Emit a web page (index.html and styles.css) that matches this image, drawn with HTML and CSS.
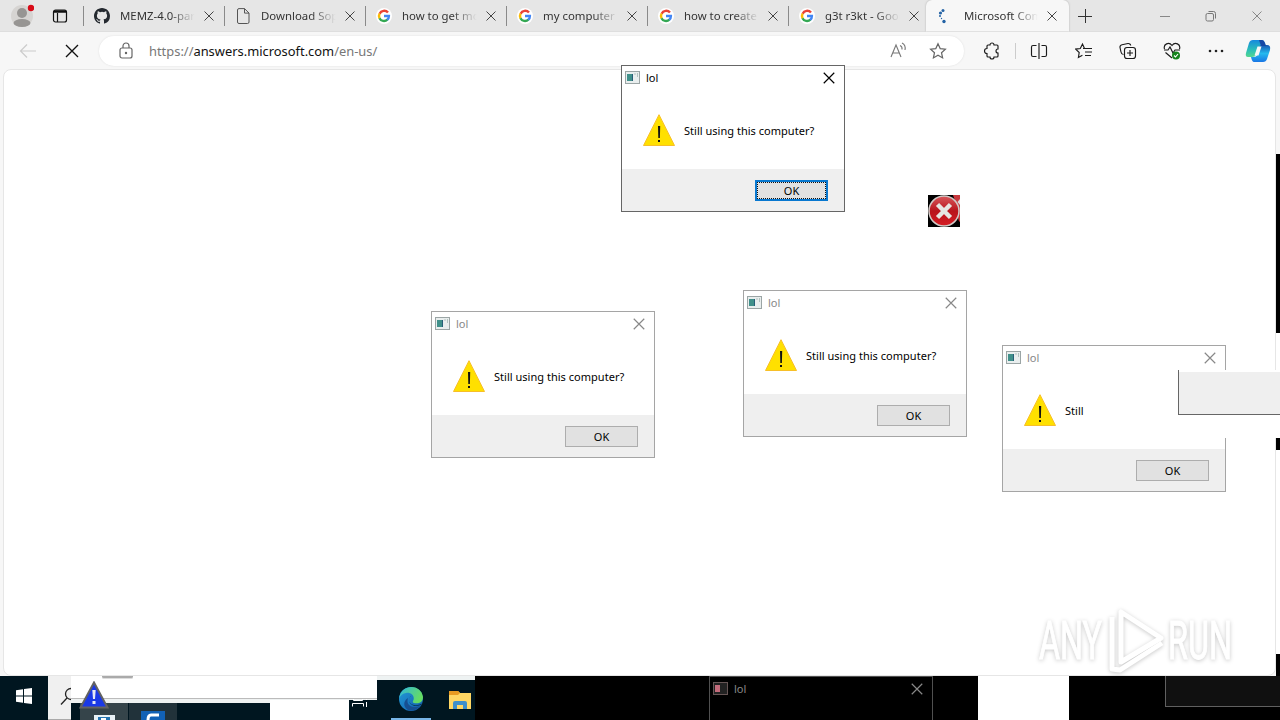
FILE: index.html
```html
<!DOCTYPE html>
<html lang="en">
<head>
<meta charset="utf-8">
<title>Microsoft Community</title>
<link rel="stylesheet" href="styles.css">
</head>
<body>
<svg class="defs" aria-hidden="true">
  <symbol id="close" viewBox="0 0 12 12"><path d="M1.5 1.5l9 9M10.5 1.5l-9 9" fill="none" stroke="currentColor" stroke-width="1"/></symbol>
  <symbol id="google" viewBox="0 0 16 16">
    <circle cx="8" cy="8" r="8" fill="#fff"/>
    <g fill="none" stroke-width="2.4"><path d="M12 4.6A5 5 0 0 0 3.6 5.7" stroke="#ea4335"/><path d="M3.6 5.6a5 5 0 0 0 0 4.8" stroke="#fbbc05"/><path d="M3.5 10.2a5 5 0 0 0 7.9 1.5" stroke="#34a853"/><path d="M11.2 11.9A5 5 0 0 0 12.9 8H8" stroke="#4285f4"/></g>
  </symbol>
  <symbol id="app" viewBox="0 0 15 13"><rect x=".5" y=".5" width="14" height="12" fill="#e9eeee" stroke="#9ba5a5"/><rect x="2" y="3" width="5" height="7" fill="#40908a"/><path d="M7.500 3v7" stroke="#285e78"/><path d="M9.500 3h1M12 3h1M12 5h1" stroke="#7d9993"/></symbol>
  <symbol id="warn" viewBox="0 0 32 32"><path d="M16 .7L31.500 31.500H.5z" fill="#ffe000" stroke="#f7bf28"/><path d="M15 12h2.200l-.3 12h-1.600zM15 26h2v2h-2z" fill="#111"/></symbol>
</svg>
<div class="desktop">
  <div class="browser">
    <div class="tabstrip">
      <div class="controls">
        <svg class="avatar" width="24" height="24" viewBox="0 0 24 24"><circle cx="12" cy="12" r="11" fill="#d6d4d2"/><circle cx="12" cy="9" r="5" fill="#979593"/><ellipse cx="12" cy="19" rx="8.500" ry="4" fill="#979593"/><circle cx="21" cy="4" r="3.200" fill="#d80b18"/></svg>
        <svg width="16" height="16" viewBox="0 0 16 16" fill="none" stroke="#111" stroke-width="1.200"><rect x="1.500" y="2" width="13" height="12" rx="2"/><path d="M2 3.500h12" stroke-width="2.500"/><path d="M5.500 5v9"/></svg>
      </div>
      <div class="tab"><svg class="fav" viewBox="0 0 16 16"><path fill="#24292f" d="M8 0C3.580 0 0 3.580 0 8c0 3.540 2.290 6.530 5.470 7.590.4.070.55-.17.55-.38v-1.490c-2.230.48-2.700-.95-2.700-.95-.36-.92-.89-1.170-.89-1.170-.73-.5.05-.49.05-.49.810.06 1.230.83 1.230.83.720 1.230 1.880.87 2.340.67.070-.52.28-.87.510-1.070-1.780-.2-3.650-.89-3.650-3.950 0-.87.310-1.590.82-2.150-.08-.2-.36-1.020.08-2.120 0 0 .67-.21 2.200.82a7.600 7.600 0 0 1 4 0c1.530-1.040 2.200-.82 2.200-.82.44 1.100.16 1.920.08 2.120.51.56.82 1.270.82 2.150 0 3.070-1.870 3.750-3.650 3.950.29.25.54.73.54 1.480v2.190c0 .21.15.46.55.38A8 8 0 0 0 16 8c0-4.420-3.580-8-8-8z"/></svg><span class="label">MEMZ-4.0-par</span><svg class="x"><use href="#close"/></svg></div>
      <div class="tab"><svg class="fav" viewBox="0 0 16 16" fill="none" stroke="#555"><path d="M9.500.6H4A1.500 1.500 0 0 0 2.500 2v12A1.500 1.500 0 0 0 4 15.500h8.500a1.500 1.500 0 0 0 1.500-1.500V5zv4.500H14"/></svg><span class="label">Download Sop</span><svg class="x"><use href="#close"/></svg></div>
      <div class="tab"><svg class="fav"><use href="#google"/></svg><span class="label">how to get mo</span><svg class="x"><use href="#close"/></svg></div>
      <div class="tab"><svg class="fav"><use href="#google"/></svg><span class="label">my computer</span><svg class="x"><use href="#close"/></svg></div>
      <div class="tab"><svg class="fav"><use href="#google"/></svg><span class="label">how to create</span><svg class="x"><use href="#close"/></svg></div>
      <div class="tab last"><svg class="fav"><use href="#google"/></svg><span class="label">g3t r3kt - Goog</span><svg class="x"><use href="#close"/></svg></div>
      <div class="tab active"><svg class="fav" viewBox="0 0 16 16" fill="#2463a5"><circle cx="6" cy="2.500" r="1.500"/><circle cx="3.500" cy="5" r="1.600"/><circle cx="3" cy="8" r="1"/><circle cx="4.500" cy="10.500" r=".7"/><circle cx="7" cy="13.500" r="1.700"/></svg><span class="label">Microsoft Com</span><svg class="x"><use href="#close"/></svg></div>
      <svg class="plus" width="16" height="16" viewBox="0 0 16 16" stroke="#333"><path d="M1 8.500h14M8.500 1v14"/></svg>
      <div class="window-buttons">
        <svg width="12" height="12" viewBox="0 0 12 12"><path d="M1 6.500h10" stroke="#888"/></svg>
        <svg width="12" height="12" viewBox="0 0 12 12" fill="none" stroke="#777"><rect x="1" y="3.500" width="7.500" height="7.500" rx="1.500"/><path d="M3.500 1.500h5a2 2 0 0 1 2 2v5"/></svg>
        <svg width="12" height="12" class="dim"><use href="#close"/></svg>
      </div>
    </div>
    <div class="toolbar">
      <svg class="back" width="18" height="16" viewBox="0 0 18 16" fill="none" stroke="#ccc" stroke-width="1.200"><path d="M17 8H2M8 1.500L1.500 8 8 14.500"/></svg>
      <svg class="stop" width="16" height="16"><use href="#close"/></svg>
      <div class="address">
        <svg width="16" height="18" viewBox="0 0 16 18" fill="none" stroke="#666" stroke-width="1.200"><rect x="2" y="6" width="12" height="10" rx="2"/><path d="M5 6V4a3 3 0 0 1 6 0v2"/><circle cx="8" cy="11" r=".6" fill="#666"/></svg>
        <div class="url">https://<b>answers.microsoft.com</b>/en-us/</div>
        <svg class="read" width="18" height="18" viewBox="0 0 18 18" fill="none" stroke="#777" stroke-width="1.100"><path d="M2 15L7 3l5 12M3.700 11h6.600M11 3.500q2.500 1 2 4M13 1q4 2 3 7"/></svg>
        <svg class="star" width="18" height="18" viewBox="0 0 18 18" fill="none" stroke="#666" stroke-width="1.200"><path d="M9 1.800l2.200 4.800 5.200.6-3.900 3.500 1.100 5.200L9 13.300l-4.600 2.600 1.100-5.200-3.900-3.500 5.200-.6z"/></svg>
      </div>
      <div class="tools">
        <svg viewBox="0 0 18 18"><path d="M5 3H7a2 2 0 0 1 4 0h3q1 0 1 1v3a2 2 0 1 0 0 4v3q0 1-1 1h-3a2 2 0 0 1-4 0H5q-1 0-1-1v-2.500a2.500 2.500 0 0 1 0-5V4q0-1 1-1z"/></svg>
        <i></i>
        <svg viewBox="0 0 18 18"><path d="M6.500 3.500H3a1.500 1.500 0 0 0-1.500 1.500v8A1.500 1.500 0 0 0 3 14.500h3.500M11.500 3.500H15A1.500 1.500 0 0 1 16.500 5v8a1.500 1.500 0 0 1-1.500 1.500h-3.500M9 1v16"/></svg>
        <svg viewBox="0 0 18 18"><path d="M9.500 6.500L7.500 2 5.300 6.500l-4.600.6 3.500 3.400-.8 5 4-2.200M8 6.500h9M10 10h7M10 13.500h6"/></svg>
        <svg viewBox="0 0 18 18"><path d="M4.500 12.500A3 3 0 0 1 2 10L1 5.500A2.500 2.500 0 0 1 3 2.700l6-1.200a2.300 2.300 0 0 1 2.700 2"/><rect x="5.500" y="5.500" width="11" height="11" rx="2.500"/><path d="M11 8v6M8 11h6"/></svg>
        <svg viewBox="0 0 18 18"><path d="M1.500 7C0 2 6-.5 9 3.500 12-.5 18 2 16.500 7M1 8h4l2-3 3 6 2-3h5M2.500 10.500L9 16"/><circle cx="13" cy="13.500" r="4" fill="#15831c" stroke="none"/><path d="M11 13.500l1.500 1.500 2.500-3" stroke="#fff"/></svg>
        <svg viewBox="0 0 18 18" class="dots"><circle cx="3" cy="9" r="1.300"/><circle cx="9" cy="9" r="1.300"/><circle cx="15" cy="9" r="1.300"/></svg>
      </div>
      <svg class="copilot" width="26" height="24" viewBox="0 0 26 24">
        <defs>
          <linearGradient id="cpa" x1="0" y1="0" x2="0" y2="1"><stop stop-color="#1689de"/><stop offset=".6" stop-color="#2cc0b7"/><stop offset="1" stop-color="#55d790"/></linearGradient>
          <linearGradient id="cpb" x1="0" y1="0" x2="0" y2="1"><stop stop-color="#1755b0"/><stop offset=".5" stop-color="#25b9ee"/><stop offset="1" stop-color="#1976e5"/></linearGradient>
        </defs>
        <path d="M8 1h9q2 0 3 3l1 4h-5q-3 0-4 4l-1 4q-1 2-4 2H3Q0 18 1 14L4 4q1-3 4-3z" fill="url(#cpa)"/>
        <path d="M16 6h6q4 0 3 5l-3 9q-1 3-4 3H9q-2 0-3-5h3q3 0 4-4l1-5q1-3 2-3z" fill="url(#cpb)"/>
        <path d="M14 1h3q2 0 3 3l1 3h-5z" fill="#1746a5"/><path d="M12.500 7.500h4l-3 9h-4z" fill="#f7f7f7"/>
      </svg>
    </div>
    <div class="page"></div>
  </div>

  <div class="taskbar">
    <div class="start"><svg width="16" height="16" viewBox="0 0 16 16" fill="#fff"><path d="M0 2.200l7-1v6.300H0zM8 1l8-1v7.500H8zM0 8.500h7v6.300l-7-1zM8 8.500h8V16l-8-1z"/></svg></div>
    <div class="search"><svg width="20" height="20" viewBox="0 0 20 20" fill="none" stroke="#222" stroke-width="1.300"><circle cx="12" cy="7" r="5.500"/><path d="M8 11l-6 6.500"/></svg></div>
    <div class="items">
      <div class="item first"><svg width="21" height="5" viewBox="0 0 21 5"><path fill="#e8f1f5" d="M0 0h21v5H0z"/><path fill="#2474b2" d="M4 2h12v3H4z"/><path fill="#fff" d="M7 3h5v2H7z"/></svg></div>
      <div class="item second"><svg width="24" height="9" viewBox="0 0 24 9"><path fill="#1261b5" d="M0 0h24v9H0z"/><path d="M18 4H10Q7 4 7 9" fill="none" stroke="#fff" stroke-width="3"/></svg></div>
    </div>
    <div class="pinned">
      <div class="pin running"><svg width="26" height="26" viewBox="0 0 26 26">
        <defs><linearGradient id="edge" x1="0" y1="0" x2="1" y2=".4"><stop stop-color="#2fb7df"/><stop offset="1" stop-color="#65dc62"/></linearGradient><linearGradient id="edgeb" x1="0" y1="0" x2="1" y2="1"><stop stop-color="#239ed9"/><stop offset="1" stop-color="#125aab"/></linearGradient></defs>
        <circle cx="13" cy="13" r="12" fill="url(#edgeb)"/><path d="M1.200 12C3-2 23-3 25 11c0 6-5 7-9 6-2-.7-1-2-.5-3C17 9 12 6 8 7c-3 .6-5 2-6.800 5z" fill="url(#edge)"/><path d="M10 12c-2 6 2 11 12 8-3 4-8 5.500-12 4-5-3-5-9 0-12z" fill="#174f91"/><path d="M13 10c-3 2-3 8 3 9 3 .5 6-.3 8-1.500l-1 1.500c-6 2-12 0-12-5 0-2 1-3.500 2-4z" fill="#062433"/>
      </svg></div>
      <div class="pin"><svg width="22" height="20" viewBox="0 0 22 20"><path d="M0 1h9l2 2h11v16H0z" fill="#ffd764"/><path d="M0 1h9l2 2-2 2H0z" fill="#e89b22"/><path d="M4 19v-6q0-2 2-2h10q2 0 2 2v6h-4v-4H8v4z" fill="#3e8fcb"/></svg></div>
    </div>
    <div class="void"></div>
    <div class="blank"></div>
    <div class="void rest"></div>
  </div>

  <div class="smear white-a"></div>
  <div class="smear white-b"></div>
  <div class="smear nub"></div>
  <svg class="smear taskview" width="18" height="8" viewBox="0 0 18 8" fill="none" stroke="#fff"><path d="M2.500 0v1.500h9V0M1.500 7.500v-3h11v3M15.500 0v1M15.500 3v5"/></svg>
  <svg class="smear bluewarn" width="30" height="28" viewBox="0 0 30 28"><path d="M15 1.500L28.500 26.500H1.500z" fill="#1a39e6" stroke="#626262" stroke-width="2"/><path d="M13.300 9h3.400l-.7 9h-2zM13.500 20h3v3h-3z" fill="#e5e9f5"/></svg>
  <div class="smear edge-a"></div><div class="smear edge-b"></div><div class="smear edge-c"></div><div class="smear edge-d"></div><div class="smear edge-e"></div>

  <div class="dialog front d1"><div class="title"><svg class="app"><use href="#app"/></svg><span>lol</span><svg class="x"><use href="#close"/></svg></div><div class="body"><svg class="warn"><use href="#warn"/></svg><span>Still using this computer?</span></div><div class="foot"><div class="ok">OK</div></div></div>
  <div class="dialog d2"><div class="title"><svg class="app"><use href="#app"/></svg><span>lol</span><svg class="x"><use href="#close"/></svg></div><div class="body"><svg class="warn"><use href="#warn"/></svg><span>Still using this computer?</span></div><div class="foot"><div class="ok">OK</div></div></div>
  <div class="dialog d3"><div class="title"><svg class="app"><use href="#app"/></svg><span>lol</span><svg class="x"><use href="#close"/></svg></div><div class="body"><svg class="warn"><use href="#warn"/></svg><span>Still using this computer?</span></div><div class="foot"><div class="ok">OK</div></div></div>
  <div class="dialog d4"><div class="title"><svg class="app"><use href="#app"/></svg><span>lol</span><svg class="x"><use href="#close"/></svg></div><div class="body"><svg class="warn"><use href="#warn"/></svg><span>Still</span></div><div class="foot"><div class="ok">OK</div></div></div>
  <div class="smear patch"></div>
  <div class="smear fragment"></div>
  <div class="dialog inverted d5"><div class="title"><svg class="app" viewBox="0 0 15 13"><rect x=".5" y=".5" width="14" height="12" fill="#222" stroke="#655"/><rect x="2" y="3" width="5" height="7" fill="#c36b7b"/></svg><span>lol</span><svg class="x"><use href="#close"/></svg></div></div>
  <div class="smear dark-fragment"></div>

  <svg class="error" width="32" height="32" viewBox="0 0 32 32">
    <defs><linearGradient id="red" x1="0" y1="0" x2="0" y2="1"><stop stop-color="#d8595c"/><stop offset=".5" stop-color="#b8141c"/><stop offset="1" stop-color="#d51d25"/></linearGradient></defs>
    <path fill="#000" d="M0 0h32v32H0z"/><path d="M25 0h7v27q-3-2-2-12z" fill="#c8383d"/><path d="M29.500 7l2.500-3v6z" fill="#ddd"/>
    <circle cx="16" cy="16" r="15" fill="url(#red)" stroke="#d1cbc8" stroke-width="1.500"/><path d="M9.500 9.500l13 13M22.500 9.500l-13 13" stroke="#e6e6e2" stroke-width="4.500"/>
  </svg>

  <svg class="watermark" width="210" height="76" viewBox="0 0 210 76">
    <g fill="#fff" stroke="#fff" stroke-width="1">
      <text x="9" y="55" textLength="63" lengthAdjust="spacingAndGlyphs">ANY</text>
      <text x="138" y="55" textLength="64" lengthAdjust="spacingAndGlyphs">RUN</text>
    </g>
    <g fill="none" stroke="#fff" stroke-width="5" stroke-linejoin="round"><path d="M91 8v50l40-24z"/><path d="M82 13v52l8 1 42-27"/></g>
  </svg>
</div>
</body>
</html>
```
FILE: styles.css
```css
* { box-sizing: border-box; }
body { margin: 0; overflow: hidden; font-family: "Noto Sans", "Open Sans", sans-serif; }
svg { display: block; flex: none; }
.defs { position: absolute; width: 0; height: 0; }
.desktop { position: relative; width: 1280px; height: 720px; overflow: hidden; background: #fff; display: flex; flex-direction: column; }
.browser { height: 676px; background: #f7f7f7; display: flex; flex-direction: column; }

.tabstrip { height: 32px; display: flex; align-items: center; background: #e6e6e6; border-bottom: 1px solid #dedede; }
.controls { width: 83px; display: flex; align-items: center; gap: 16px; padding-left: 10px; }
.controls .avatar { margin-right: 2px; }
.tab { position: relative; width: 141px; height: 32px; padding-left: 11px; display: flex; align-items: center; color: #333; flex: none; }
.tab::before { content: ""; position: absolute; left: 0; top: 6px; width: 1px; height: 20px; background: #8a8a8a; }
.tab .fav { width: 16px; height: 16px; }
.tab .label { width: 83px; margin-left: 10px; white-space: nowrap; font-size: 11.4px; line-height: 18px; -webkit-mask-image: linear-gradient(90deg, #000 60%, transparent 90%); mask-image: linear-gradient(90deg, #000 60%, transparent 90%); }
.tab .x { width: 12px; height: 12px; color: #444; }
.tab.last { width: 138px; }
.tab.active { width: 143px; background: #f7f7f7; border-radius: 6px 6px 0 0; box-shadow: 0 0 2px #aaa; clip-path: inset(0 -2px 0 -2px); }
.tab.active::before { display: none; }
.tab.active .label { margin-left: 11px; width: 82px; }
.plus { margin-left: 8px; }
.window-buttons { margin-left: auto; display: flex; gap: 34px; padding-right: 17px; }
.dim { color: #888; }

.toolbar { height: 38px; display: flex; align-items: center; padding-left: 19px; }
.stop { margin-left: 27px; color: #111; }
.address { width: 865px; height: 30px; margin-left: 19px; border-radius: 15px; background: #fff; box-shadow: 0 0 2px #ddd; display: flex; align-items: center; padding: 0 17px 0 19px; }
.url { margin-left: 15px; font-size: 12.9px; line-height: 20px; color: #777; white-space: nowrap; flex: 1; }
.url b { font-weight: 400; color: #111; }
.star { margin-left: 22px; }
.tools { display: flex; align-items: center; margin-left: 19px; }
.tools svg { width: 18px; height: 18px; margin-right: 26.300px; fill: none; stroke: #1b1b1b; stroke-width: 1.150; }
.tools i { width: 1px; height: 16px; background: #ccc; margin: 0 14px 0 -12px; }
.tools .dots { fill: #222; stroke: none; margin-right: 20px; }
.page { flex: 1; margin: -1px 4px 0 3px; background: #fff; border: 1px solid #e6e6e6; border-radius: 8px; }

.taskbar { height: 44px; display: flex; background: #001620; }
.start { width: 48px; display: flex; align-items: center; justify-content: center; padding-bottom: 4px; }
.search { width: 23px; background: #f0f0f0; border-bottom: 1px solid #aaa; padding: 11px 0 0 11px; overflow: hidden; }
.items { width: 306px; padding-left: 9px; display: flex; gap: 1px; }
.item { width: 48px; display: flex; align-items: flex-end; justify-content: center; }
.item.first { background: #35444a; }
.item.second { background: #21323a; }
.pinned { width: 98px; border-top: 4px solid #eef2f2; display: flex; padding-left: 14px; gap: 9px; }
.pin { width: 40px; flex: none; display: flex; align-items: center; justify-content: center; }
.running { border-bottom: 2px solid #78b5e7; }
.pin:last-child { width: 35px; padding-left: 4px; }
.void { width: 503px; background: #000; }
.blank { width: 91px; background: #fff; }
.rest { flex: 1; }

.smear { position: absolute; }
.white-a { left: 71px; top: 676px; width: 306px; height: 27px; background: #fff; border-bottom: 4px solid #eff2f2; box-shadow: inset 0 -1px #bbb; clip-path: polygon(0 0, 306px 0, 306px 24px, 278px 24px, 278px 27px, 0 27px); }
.white-b { left: 270px; top: 700px; width: 79px; height: 20px; background: #fff; }
.nub { left: 102px; top: 676px; width: 31px; height: 3px; background: #aaa; border-radius: 0 0 2px 2px; border-bottom: 1px solid #ddd; }
.taskview { left: 351px; top: 699px; }
.bluewarn { left: 79px; top: 681px; }
.edge-a, .edge-b, .edge-c, .edge-d, .edge-e { left: 1276px; width: 4px; background: #000; }
.edge-a { top: 154px; height: 179px; }
.edge-b { top: 438px; height: 12px; }
.edge-c { top: 654px; height: 22px; }
.edge-d { top: 450px; height: 204px; background: #fff; }
.edge-e { top: 333px; height: 37px; background: #fff; }

.dialog { position: absolute; width: 224px; height: 147px; background: #fff; border: 1px solid #a5a5a5; display: flex; flex-direction: column; font-size: 11px; line-height: 16px; color: #000; }
.title { height: 24px; display: flex; align-items: center; padding: 0 8px 1px 3px; color: #888; }
.title .app { width: 15px; height: 13px; }
.title span { margin-left: 6px; flex: 1; }
.title .x { width: 14px; height: 14px; }
.body { flex: 1; display: flex; align-items: center; padding: 0 0 0 21px; white-space: nowrap; }
.warn { width: 32px; height: 32px; }
.body span { margin-left: 9px; padding-top: 2px; letter-spacing: .02px; }
.foot { height: 42px; background: #efefef; padding: 11px 16px 0 0; display: flex; justify-content: flex-end; align-items: flex-start; }
.ok { width: 73px; height: 21px; border: 1px solid #adadad; background: #e1e1e1; display: flex; align-items: center; justify-content: center; }
.front { border-color: #666; }
.front .title { color: #000; }
.front .ok { border: 2px solid #0878d0; outline: 1px dotted #111; outline-offset: -3px; }
.d1 { left: 621px; top: 65px; }
.d2 { left: 431px; top: 311px; }
.d3 { left: 743px; top: 290px; }
.d4 { left: 1002px; top: 345px; }
.d5 { left: 709px; top: 676px; }
.inverted { background: #000; border-color: #505050; }
.patch { left: 1178px; top: 370px; width: 102px; height: 68px; background: #fff; }
.fragment { left: 1178px; top: 370px; width: 102px; height: 45px; background: #efefef; border: solid #666; border-width: 0 0 1px 1px; box-shadow: inset 0 2px #fff; }
.dark-fragment { left: 1165px; top: 676px; width: 115px; height: 31px; background: #101010; border: solid #606060; border-width: 0 0 1px 1px; }
.error { position: absolute; left: 928px; top: 195px; }
.watermark { position: absolute; left: 1030px; top: 604px; overflow: visible; filter: drop-shadow(0 1px 2px rgba(0,0,0,.22)); font: 53px Roboto, sans-serif; }
```
